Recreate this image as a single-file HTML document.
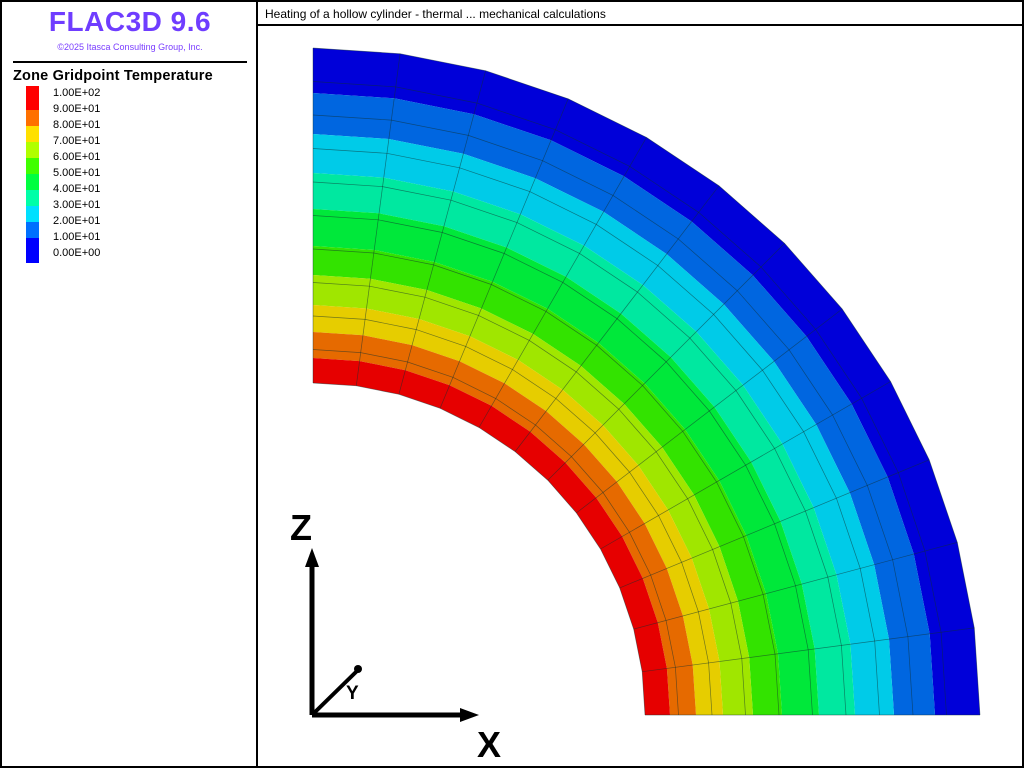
<!DOCTYPE html>
<html><head><meta charset="utf-8"><style>
html,body{margin:0;padding:0;background:#fff;width:1024px;height:768px;overflow:hidden;font-family:"Liberation Sans",sans-serif}
#left{position:absolute;left:0;top:0;width:254px;height:764px;border:2px solid #000;border-right:none}
#main{position:absolute;left:256px;top:0;width:764px;height:764px;border:2px solid #000}
#hdr{position:absolute;left:0;top:0;width:764px;height:24px;border-bottom:2px solid #000;font-size:12px;line-height:25px;padding-left:7px;box-sizing:border-box}
.t1{position:absolute;left:0;width:256px;text-align:center;top:4px;font-size:28px;font-weight:bold;color:#6f3dff;letter-spacing:0.5px}
.t2{position:absolute;left:0;width:256px;text-align:center;top:40px;font-size:9px;color:#7a3dff}
.hr{position:absolute;left:11px;top:59px;width:234px;height:2px;background:#000}
.lt{position:absolute;left:11px;top:66px;font-size:14.5px;font-weight:bold;letter-spacing:0.2px}
.sw{position:absolute;left:24px;width:13px}
.lb{position:absolute;left:51px;font-size:11px}
svg{position:absolute;left:0;top:0}
</style></head><body>
<div id="left">
<div class="t1">FLAC3D 9.6</div>
<div class="t2">©2025 Itasca Consulting Group, Inc.</div>
<div class="hr"></div>
<div class="lt">Zone Gridpoint Temperature</div>
<div class="sw" style="top:84px;height:24px;background:#ff0000"></div>
<div class="sw" style="top:108px;height:16px;background:#ff7000"></div>
<div class="sw" style="top:124px;height:16px;background:#ffe000"></div>
<div class="sw" style="top:140px;height:16px;background:#b0ff00"></div>
<div class="sw" style="top:156px;height:16px;background:#40ff00"></div>
<div class="sw" style="top:172px;height:16px;background:#00ff40"></div>
<div class="sw" style="top:188px;height:16px;background:#00ffa8"></div>
<div class="sw" style="top:204px;height:16px;background:#00e0ff"></div>
<div class="sw" style="top:220px;height:16px;background:#0070ff"></div>
<div class="sw" style="top:236px;height:25px;background:#0000ff"></div>
<div class="lb" style="top:85px">1.00E+02</div>
<div class="lb" style="top:101px">9.00E+01</div>
<div class="lb" style="top:117px">8.00E+01</div>
<div class="lb" style="top:133px">7.00E+01</div>
<div class="lb" style="top:149px">6.00E+01</div>
<div class="lb" style="top:165px">5.00E+01</div>
<div class="lb" style="top:181px">4.00E+01</div>
<div class="lb" style="top:197px">3.00E+01</div>
<div class="lb" style="top:213px">2.00E+01</div>
<div class="lb" style="top:229px">1.00E+01</div>
<div class="lb" style="top:245px">0.00E+00</div>
</div>
<div id="main"><div id="hdr">Heating of a hollow cylinder - thermal ... mechanical calculations</div></div>
<svg id="s" width="1024" height="768" xmlns="http://www.w3.org/2000/svg"></svg>
<script>
var cx=313,cy=715,N=12;
function pt(r,k){var a=k*Math.PI/2/N;return [(cx+r*Math.sin(a)).toFixed(1),(cy-r*Math.cos(a)).toFixed(1)];}
function ring(r1,r2){var p=[];for(var k=0;k<=N;k++)p.push(pt(r2,k).join(','));for(var k=N;k>=0;k--)p.push(pt(r1,k).join(','));return p.join(' ');}
var radii=[667,622,581,542,506,469,440,410,383,357,332];
var cols=['#0000d9','#0066e0','#00cbe8','#00e8a0','#00e83a','#33e300','#a0e600','#e6cd00','#e66a00','#e60000'];
var h='';
for(var i=0;i<10;i++)h+='<polygon points="'+ring(radii[i+1],radii[i])+'" fill="'+cols[i]+'"/>';
for(var j=0;j<=10;j++){var r=332+j*33.5;var p=[];for(var k=0;k<=N;k++)p.push(pt(r,k).join(','));h+='<polyline points="'+p.join(' ')+'" fill="none" stroke="#103030" stroke-opacity="0.55" stroke-width="0.7"/>';}
for(var k=0;k<=N;k++){var a=pt(332,k),b=pt(667,k);h+='<line x1="'+a[0]+'" y1="'+a[1]+'" x2="'+b[0]+'" y2="'+b[1]+'" stroke="#103030" stroke-opacity="0.55" stroke-width="0.7"/>';}
h+='<line x1="312" y1="715" x2="312" y2="562" stroke="#000" stroke-width="5"/><polygon points="312,548 305,567 319,567" fill="#000"/>';
h+='<line x1="312" y1="715" x2="464" y2="715" stroke="#000" stroke-width="5"/><polygon points="479,715 460,708 460,722" fill="#000"/>';
h+='<line x1="312" y1="715" x2="358" y2="670" stroke="#000" stroke-width="4"/><circle cx="358" cy="669" r="4" fill="#000"/>';
h+='<text x="290" y="540" font-family="Liberation Sans" font-weight="bold" font-size="36">Z</text>';
h+='<text x="477" y="757" font-family="Liberation Sans" font-weight="bold" font-size="36">X</text>';
h+='<text x="346" y="699" font-family="Liberation Sans" font-weight="bold" font-size="19">Y</text>';
document.getElementById('s').innerHTML=h;
</script>
</body></html>
